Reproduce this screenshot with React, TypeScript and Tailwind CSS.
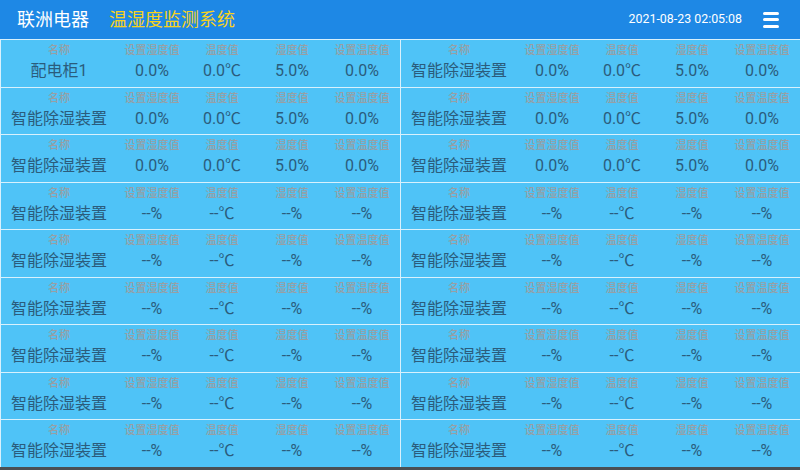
import React from "react";

type Device = {
  name: string;
  setHumidity: string;
  temperature: string;
  humidity: string;
  setTemperature: string;
};

const live = (name: string): Device => ({
  name,
  setHumidity: "0.0%",
  temperature: "0.0℃",
  humidity: "5.0%",
  setTemperature: "0.0%",
});

const offline = (): Device => ({
  name: "智能除湿装置",
  setHumidity: "--%",
  temperature: "--℃",
  humidity: "--%",
  setTemperature: "--%",
});

// rows of [left, right]
const rows: [Device, Device][] = [
  [live("配电柜1"), live("智能除湿装置")],
  [live("智能除湿装置"), live("智能除湿装置")],
  [live("智能除湿装置"), live("智能除湿装置")],
  ...Array.from({ length: 6 }, () => [offline(), offline()] as [Device, Device]),
];

const labels = ["名称", "设置湿度值", "温度值", "湿度值", "设置温度值"];

function DeviceCell({ device }: { device: Device }) {
  const values = [
    device.name,
    device.setHumidity,
    device.temperature,
    device.humidity,
    device.setTemperature,
  ];
  return (
    <div className="bg-[#4fc3f7] grid grid-cols-[116px_70px_70px_70px_70px] grid-rows-[auto_auto] content-start pt-[4px] gap-y-[3px]">
      {labels.map((l) => (
        <span
          key={l}
          className="text-center text-[11px] leading-[14px] font-medium text-[#979fa4]"
        >
          {l}
        </span>
      ))}
      {values.map((v, i) => (
        <span
          key={i}
          className="text-center text-[16px] leading-[20px] text-[#2b5c7c]"
        >
          {v}
        </span>
      ))}
    </div>
  );
}

export default function App() {
  return (
    <div
      className="w-[800px] h-[470px] flex flex-col overflow-hidden bg-[#d8f1fd]"
      style={{ fontFamily: 'Roboto, "Noto Sans CJK SC", sans-serif' }}
    >
      {/* Header */}
      <header className="h-[39px] shrink-0 bg-[#1e88e5] flex items-center pl-[17px] pr-[21px]">
        <span className="text-white text-[18px] leading-none">联洲电器</span>
        <span className="ml-[20px] text-[#f8d21c] text-[18px] leading-none">
          温湿度监测系统
        </span>
        <span className="ml-auto text-white text-[12.4px] leading-none">
          2021-08-23 02:05:08
        </span>
        <div className="ml-[21px] flex flex-col gap-[3.5px] w-[16px]">
          <span className="h-[3px] rounded-full bg-white" />
          <span className="h-[3px] rounded-full bg-white" />
          <span className="h-[3px] rounded-full bg-white" />
        </div>
      </header>

      {/* Device grid */}
      <div className="flex-1 grid grid-cols-2 grid-rows-9 gap-px pt-px pl-px">
        {rows.map(([l, r], i) => (
          <React.Fragment key={i}>
            <DeviceCell device={l} />
            <DeviceCell device={r} />
          </React.Fragment>
        ))}
      </div>
      <div className="h-[3px] shrink-0 bg-[#4a4f54]" />
    </div>
  );
}
